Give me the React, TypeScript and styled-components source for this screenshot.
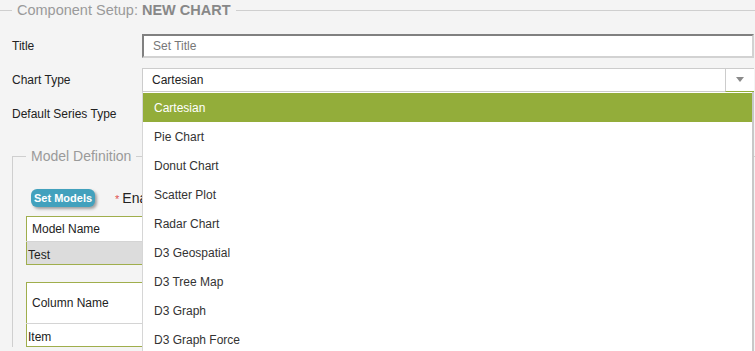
import React from 'react';
import styled, { createGlobalStyle } from 'styled-components';

const GlobalStyle = createGlobalStyle`
  html, body {
    margin: 0;
    padding: 0;
    background: #f4f4f4;
    font-family: "Liberation Sans", Arial, sans-serif;
    color: #333;
    overflow: hidden;
  }
`;

const Page = styled.div`
  width: 755px;
  height: 351px;
  overflow: hidden;
`;

const SetupFieldset = styled.fieldset`
  margin: 1px 0 0 -1px;
  padding: 0 0 0 13px;
  border: none;
  border-top: 1px solid #cfcfcf;
  min-width: 0;
`;

const Legend = styled.legend<{ $size?: number }>`
  padding: 0 5px;
  font-size: ${({ $size }) => $size ?? 14.5}px;
  line-height: 18px;
  color: #9a9a9a;

  b {
    color: #888;
  }
`;

const FormRow = styled.div<{ $top: number }>`
  display: flex;
  align-items: center;
  margin-top: ${({ $top }) => $top}px;
  height: 24px;
`;

const Label = styled.label`
  width: 130px;
  flex-shrink: 0;
  font-size: 12px;
  color: #222;
`;

const TextInput = styled.input`
  box-sizing: border-box;
  width: 612px;
  height: 24px;
  padding: 0 9px;
  border-style: solid;
  border-width: 2px;
  border-color: #808080 #d2d2d2 #d2d2d2 #808080;
  background: #fff;
  font-family: inherit;
  font-size: 12px;
  color: #333;
  outline: none;

  &::placeholder {
    color: #777;
  }
`;

const SelectWrap = styled.div`
  position: relative;
  width: 612px;
  height: 24px;
`;

const SelectBox = styled.div`
  box-sizing: border-box;
  display: flex;
  height: 24px;
  background: #fff;
  border: 1px solid #cccccc;
  border-right: none;
`;

const SelectValue = styled.div`
  flex: 1;
  display: flex;
  align-items: center;
  padding-left: 9px;
  font-size: 12px;
  color: #222;
`;

const ArrowButton = styled.div`
  box-sizing: border-box;
  width: 29px;
  display: flex;
  align-items: center;
  justify-content: center;
  border-left: 1px solid #cccccc;
  border-bottom: 1px solid #93ad3a;
  margin-bottom: -1px;
  padding-bottom: 2px;
`;

const Caret = styled.span`
  width: 0;
  height: 0;
  border-left: 4px solid transparent;
  border-right: 4px solid transparent;
  border-top: 5px solid #8a8a8a;
`;

const Dropdown = styled.ul`
  position: absolute;
  top: 24px;
  left: 0;
  width: 612px;
  box-sizing: border-box;
  margin: 0;
  padding: 1px 0 0;
  list-style: none;
  background: #fff;
  border-left: 1px solid #d6d6d6;
  border-right: 2px solid #c8c8c8;
  z-index: 10;
`;

const Option = styled.li<{ $active?: boolean }>`
  height: 29px;
  display: flex;
  align-items: center;
  padding-left: 11px;
  font-size: 12px;
  color: ${({ $active }) => ($active ? '#fff' : '#333')};
  background: ${({ $active }) => ($active ? '#93ad3a' : '#fff')};
`;

const ModelFieldset = styled.fieldset`
  margin: 21px 0 0 0;
  padding: 0 0 0 13px;
  border: 1px solid #cfcfcf;
  border-right: none;
  border-bottom: none;
  min-width: 0;
`;

const Toolbar = styled.div`
  display: flex;
  align-items: center;
  margin-top: 24px;
  padding-left: 5px;
  height: 18px;
`;

const ActionButton = styled.button`
  height: 18px;
  padding: 0 3px;
  border: none;
  border-radius: 6px;
  background: #42a1bd;
  color: #fff;
  font-family: inherit;
  font-size: 11px;
  font-weight: bold;
  line-height: 18px;
  box-shadow: 2px 2px 3px rgba(0, 0, 0, 0.35);
`;

const Required = styled.span`
  margin-left: 20px;
  font-size: 14px;
  color: #222;
  white-space: nowrap;

  i {
    font-style: normal;
    color: #e05050;
    font-size: 11px;
    margin-right: 3px;
  }
`;

const GridTable = styled.table<{ $top: number }>`
  margin-top: ${({ $top }) => $top}px;
  width: 700px;
  border-collapse: collapse;
  background: #fff;
  border: 1px solid #9fae4c;
  font-size: 12px;
  color: #222;
`;

const HeadCell = styled.th<{ $h: number }>`
  height: ${({ $h }) => $h}px;
  padding: 0 0 0 5px;
  text-align: left;
  font-weight: normal;
  border-bottom: 1px solid #d4d4d4;
`;

const BodyCell = styled.td<{ $shade?: boolean }>`
  height: 18px;
  padding: 4px 0 0 1px;
  background: ${({ $shade }) => ($shade ? '#dcdcdc' : '#fff')};
`;

const chartTypes = [
  'Cartesian',
  'Pie Chart',
  'Donut Chart',
  'Scatter Plot',
  'Radar Chart',
  'D3 Geospatial',
  'D3 Tree Map',
  'D3 Graph',
  'D3 Graph Force',
];

export default function App() {
  return (
    <Page>
      <GlobalStyle />
      <SetupFieldset>
        <Legend>
          Component Setup: <b>NEW CHART</b>
        </Legend>

        <FormRow $top={15}>
          <Label>Title</Label>
          <TextInput placeholder="Set Title" />
        </FormRow>

        <FormRow $top={10}>
          <Label>Chart Type</Label>
          <SelectWrap>
            <SelectBox>
              <SelectValue>Cartesian</SelectValue>
              <ArrowButton>
                <Caret />
              </ArrowButton>
            </SelectBox>
            <Dropdown>
              {chartTypes.map((t, i) => (
                <Option key={t} $active={i === 0}>
                  {t}
                </Option>
              ))}
            </Dropdown>
          </SelectWrap>
        </FormRow>

        <FormRow $top={10}>
          <Label>Default Series Type</Label>
        </FormRow>

        <ModelFieldset>
          <Legend $size={14}>Model Definition</Legend>

          <Toolbar>
            <ActionButton>Set Models</ActionButton>
            <Required>
              <i>*</i>Enable
            </Required>
          </Toolbar>

          <GridTable $top={9}>
            <thead>
              <tr>
                <HeadCell $h={24}>Model Name</HeadCell>
              </tr>
            </thead>
            <tbody>
              <tr>
                <BodyCell $shade>Test</BodyCell>
              </tr>
            </tbody>
          </GridTable>

          <GridTable $top={17}>
            <thead>
              <tr>
                <HeadCell $h={40}>Column Name</HeadCell>
              </tr>
            </thead>
            <tbody>
              <tr>
                <BodyCell>Item</BodyCell>
              </tr>
            </tbody>
          </GridTable>
        </ModelFieldset>
      </SetupFieldset>
    </Page>
  );
}
